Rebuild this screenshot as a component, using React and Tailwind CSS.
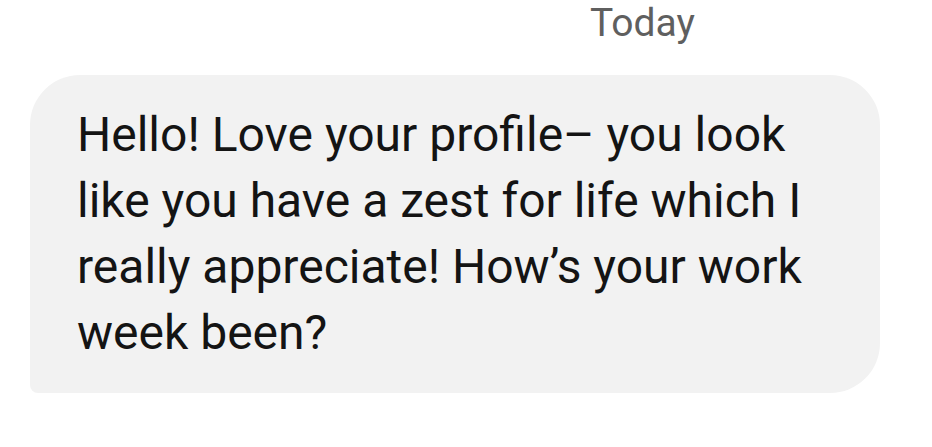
export default function App() {
  const lines = [
    'Hello! Love your profile– you look',
    'like you have a zest for life which I',
    'really appreciate! How’s your work',
    'week been?',
  ]

  return (
    <div className="w-[932px] h-[447px] bg-white overflow-hidden font-['Roboto',sans-serif]">
      {/* date divider */}
      <div className="flex justify-end pr-[237px]">
        <span className="text-[39px] leading-[46px] text-[#5f5f5f]">Today</span>
      </div>

      {/* message bubble */}
      <div className="mt-[29px] ml-[30px] w-[850px] h-[318px] bg-[#f2f2f2] rounded-[50px] rounded-bl-[8px] pl-[47px] pt-[27px]">
        <p className="text-[48px] leading-[66px] text-[#141414] whitespace-nowrap">
          {lines.map(line => (
            <span key={line} className="block">{line}</span>
          ))}
        </p>
      </div>
    </div>
  )
}
